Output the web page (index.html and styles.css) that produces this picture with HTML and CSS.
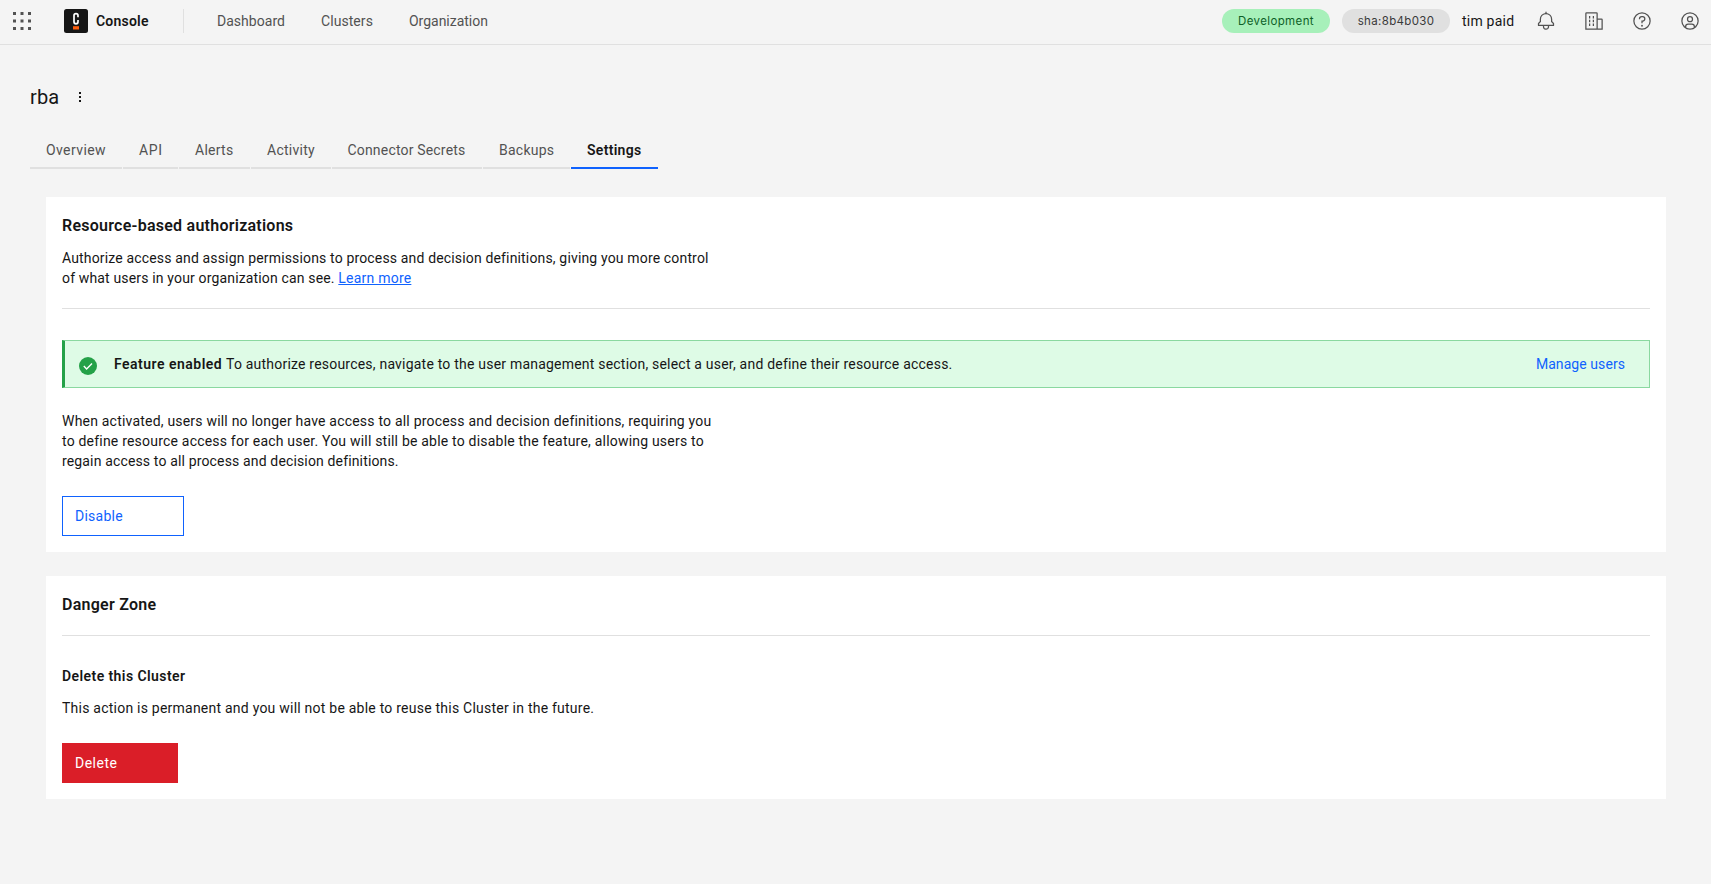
FILE: index.html
```
<!DOCTYPE html>
<html lang="en">
<head>
<meta charset="utf-8">
<title>Console</title>
<link rel="stylesheet" href="styles.css">
</head>
<body>
<header class="header">
  <button class="apps" aria-label="App switcher">
    <svg width="18" height="18" viewBox="0 0 18 18"><path d="M0 0h3v3H0zM7.5 0h3v3h-3zM15 0h3v3h-3zM0 7.5h3v3H0zM7.5 7.5h3v3h-3zM15 7.5h3v3h-3zM0 15h3v3H0zM7.5 15h3v3h-3zM15 15h3v3h-3z"/></svg>
  </button>
  <a class="brand">
    <svg class="logo" width="24" height="24" viewBox="0 0 24 24"><rect width="24" height="24" rx="2.5" fill="#161616"/><path d="M14 8.2V6.6a2 2 0 0 0-4 0v6.2a2 2 0 0 0 4 0v-1.9" fill="none" stroke="#fff" stroke-width="1.7"/><rect x="9" y="17.2" width="6" height="3.3" fill="#fc5d0d"/></svg>
    <span class="brand-name">Console</span>
  </a>
  <nav class="nav"><a class="nav-dashboard">Dashboard</a><a class="nav-clusters">Clusters</a><a class="nav-org">Organization</a></nav>
  <div class="actions">
    <span class="tag tag-green">Development</span>
    <span class="tag tag-gray">sha:8b4b030</span>
    <span class="org">tim paid</span>
    <button class="icon" aria-label="Notifications"><svg width="20" height="20" viewBox="0 0 32 32"><path d="M28.7071,19.293,26,16.5859V13a10.0136,10.0136,0,0,0-9-9.9492V1H15V3.0508A10.0136,10.0136,0,0,0,6,13v3.5859L3.2929,19.293A1,1,0,0,0,3,20v3a1,1,0,0,0,1,1h7v.7768a5.152,5.152,0,0,0,4.5,5.1987A5.0057,5.0057,0,0,0,21,25V24h7a1,1,0,0,0,1-1V20A1,1,0,0,0,28.7071,19.293ZM19,25a3,3,0,0,1-6,0V24h6Zm8-3H5V20.4141L7.707,17.707A1,1,0,0,0,8,17V13a8,8,0,0,1,16,0v4a1,1,0,0,0,.293.707L27,20.4141Z"/></svg></button>
    <button class="icon" aria-label="Organization"><svg width="20" height="20" viewBox="0 0 32 32"><path d="M8 8h2v4H8zM8 14h2v4H8zM14 8h2v4h-2zM14 14h2v4h-2zM8 20h2v4H8zM14 20h2v4h-2z"/><path d="M30,14a2,2,0,0,0-2-2H22V4a2,2,0,0,0-2-2H4A2,2,0,0,0,2,4V30H30ZM4,4H20V28H4ZM22,28V14h6V28Z"/></svg></button>
    <button class="icon" aria-label="Help"><svg width="20" height="20" viewBox="0 0 32 32"><path d="M16,2A14,14,0,1,0,30,16,14,14,0,0,0,16,2Zm0,26A12,12,0,1,1,28,16,12,12,0,0,1,16,28Z"/><circle cx="16" cy="23.5" r="1.5"/><path d="M17,8H15.5A4.49,4.49,0,0,0,11,12.5V13h2v-.5A2.5,2.5,0,0,1,15.5,10H17a2.5,2.5,0,0,1,0,5H15v4.5h2V17a4.5,4.5,0,0,0,0-9Z"/></svg></button>
    <button class="icon" aria-label="User"><svg width="20" height="20" viewBox="0 0 32 32"><path d="M16,8a5,5,0,1,0,5,5A5,5,0,0,0,16,8Zm0,8a3,3,0,1,1,3-3A3.0034,3.0034,0,0,1,16,16Z"/><path d="M16,2A14,14,0,1,0,30,16,14.0158,14.0158,0,0,0,16,2ZM10,26.3765V25a3.0033,3.0033,0,0,1,3-3h6a3.0033,3.0033,0,0,1,3,3v1.3765a11.8989,11.8989,0,0,1-12,0Zm13.9925-1.4507A5.0016,5.0016,0,0,0,19,20H13a5.0016,5.0016,0,0,0-4.9925,4.9258,12,12,0,1,1,15.985,0Z"/></svg></button>
  </div>
</header>
<main class="main">
  <div class="title-row">
    <h1>rba</h1>
    <svg class="kebab" width="16" height="16" viewBox="0 0 16 16"><path d="M7 3h2v2H7zM7 7h2v2H7zM7 11h2v2H7z"/></svg>
  </div>
  <div class="tabs">
    <a class="tab tab-overview">Overview</a>
    <a class="tab tab-api">API</a>
    <a class="tab tab-alerts">Alerts</a>
    <a class="tab tab-activity">Activity</a>
    <a class="tab tab-secrets">Connector Secrets</a>
    <a class="tab tab-backups">Backups</a>
    <a class="tab tab-settings active">Settings</a>
  </div>
  <section class="card">
    <h2 class="card-title">Resource-based authorizations</h2>
    <p class="intro">Authorize access and assign permissions to process and decision definitions, giving you more control<br>of what users in your organization can see. <a class="link">Learn more</a></p>
    <hr>
    <div class="notification">
      <svg class="check" width="20" height="20" viewBox="0 0 20 20"><circle cx="10" cy="10" r="9" fill="#24a148"/><path d="M5.8 10.1l2.8 2.8 5.4-5.4" fill="none" stroke="#fff" stroke-width="1.4"/></svg>
      <strong>Feature enabled</strong>
      <span class="message">To authorize resources, navigate to the user management section, select a user, and define their resource access.</span>
      <a class="manage">Manage users</a>
    </div>
    <p class="description">When activated, users will no longer have access to all process and decision definitions, requiring you<br>to define resource access for each user. You will still be able to disable the feature, allowing users to<br><span class="last-line">regain access to all process and decision definitions.</span></p>
    <button class="btn btn-outline">Disable</button>
  </section>
  <section class="card">
    <h2 class="card-title">Danger Zone</h2>
    <hr>
    <h3>Delete this Cluster</h3>
    <p class="warning">This action is permanent and you will not be able to reuse this Cluster in the future.</p>
    <button class="btn btn-danger">Delete</button>
  </section>
</main>
</body>
</html>
```
FILE: styles.css
```
* { box-sizing: border-box; }
body {
  margin: 0;
  min-height: 884px;
  background: #f4f4f4;
  color: #161616;
  font: 14px/20px Roboto, sans-serif;
  letter-spacing: 0.2px;
}
h1, h2, h3, p { margin: 0; }
button { border: 0; padding: 0; background: none; font: inherit; letter-spacing: inherit; color: inherit; }

.header {
  display: flex;
  align-items: center;
  height: 45px;
  padding-bottom: 2px;
  border-bottom: 1px solid #e0e0e0;
}
.apps { display: flex; width: 31px; margin-left: 13px; fill: #525252; }
.brand { display: flex; align-items: center; gap: 8px; width: 119px; margin-left: 20px; }
.brand-name { font-weight: 600; letter-spacing: 0.22px; }
.nav {
  display: flex;
  align-items: center;
  height: 24px;
  padding-left: 33px;
  border-left: 1px solid #e0e0e0;
  color: #525252;
}
.nav-dashboard { width: 104px; letter-spacing: 0.03px; }
.nav-clusters { width: 88px; letter-spacing: 0.06px; }
.nav-org { letter-spacing: -0.02px; }
.actions { display: flex; align-items: center; margin-left: auto; fill: #525252; }
.tag {
  width: 108px;
  height: 24px;
  margin-right: 12px;
  border-radius: 12px;
  font-family: Inter, sans-serif;
  font-size: 11.5px;
  line-height: 24px;
  text-align: center;
}
.tag-green { background: #a7f0ba; color: #0e6027; letter-spacing: 0.38px; }
.tag-gray { background: #e0e0e0; color: #393939; letter-spacing: 0.34px; }
.org { width: 60px; letter-spacing: 0.22px; }
.icon { display: flex; align-items: center; justify-content: center; width: 48px; height: 42px; }
.icon:last-child { margin-right: -3px; }

.main { padding: 40px 30px 0; }
.title-row { display: flex; align-items: center; gap: 13px; height: 24px; }
h1 { font-size: 20px; font-weight: 400; line-height: 24px; letter-spacing: 0.1px; }
.kebab { fill: #161616; }

.tabs { display: flex; gap: 1px; margin-top: 20px; }
.tab {
  height: 40px;
  padding-left: 16px;
  border-bottom: 2px solid #e0e0e0;
  color: #525252;
  line-height: 42px;
  letter-spacing: 0.25px;
}
.tab-overview { width: 92px; letter-spacing: 0.4px; }
.tab-api { width: 55px; letter-spacing: 0.7px; }
.tab-alerts { width: 71px; }
.tab-activity { width: 79.5px; }
.tab-secrets { width: 150.5px; letter-spacing: 0.18px; }
.tab-backups { width: 87px; }
.tab-settings { width: 87px; letter-spacing: 0.3px; }
.tab.active { border-color: #0f62fe; color: #161616; font-weight: 600; }

.card { margin: 28px 15px 0 16px; padding: 17px 16px 16px; background: #fff; }
.card + .card { margin-top: 24px; }
.card-title { font-size: 16px; font-weight: 600; line-height: 24px; letter-spacing: 0.25px; }
.intro { margin-top: 10px; padding-bottom: 2px; line-height: 20px; letter-spacing: 0.157px; }
.link { color: #0f62fe; text-decoration: underline; letter-spacing: 0.22px; }
hr { height: 1px; margin: 18px 0 30px; border: 0; background: #e0e0e0; }
.notification {
  display: flex;
  align-items: center;
  height: 48px;
  margin-top: 31px;
  padding: 0 24px 0 13px;
  border: 1px solid #8ad8a0;
  border-left: 3px solid #24a148;
  background: #defbe6;
}
.check { margin-top: 4px; }
.notification strong { width: 112px; margin-left: 16px; font-weight: 600; letter-spacing: 0.49px; }
.message { letter-spacing: 0.21px; }
.manage { margin-left: auto; color: #0f62fe; letter-spacing: 0.07px; }
.description { margin: 23px 0 25px; letter-spacing: 0.205px; }
.last-line { letter-spacing: 0.15px; }
.btn { display: block; height: 40px; padding-left: 13px; text-align: left; }
.btn-outline { width: 122px; padding-left: 12px; border: 1px solid #0f62fe; color: #0f62fe; letter-spacing: 0.25px; }
.btn-danger { width: 116px; background: #da1e28; color: #fff; letter-spacing: 0.5px; }
h3 { font-size: 14px; font-weight: 600; line-height: 20px; letter-spacing: 0.42px; }
.warning { margin: 12px 0 25px; letter-spacing: 0.23px; }
```
